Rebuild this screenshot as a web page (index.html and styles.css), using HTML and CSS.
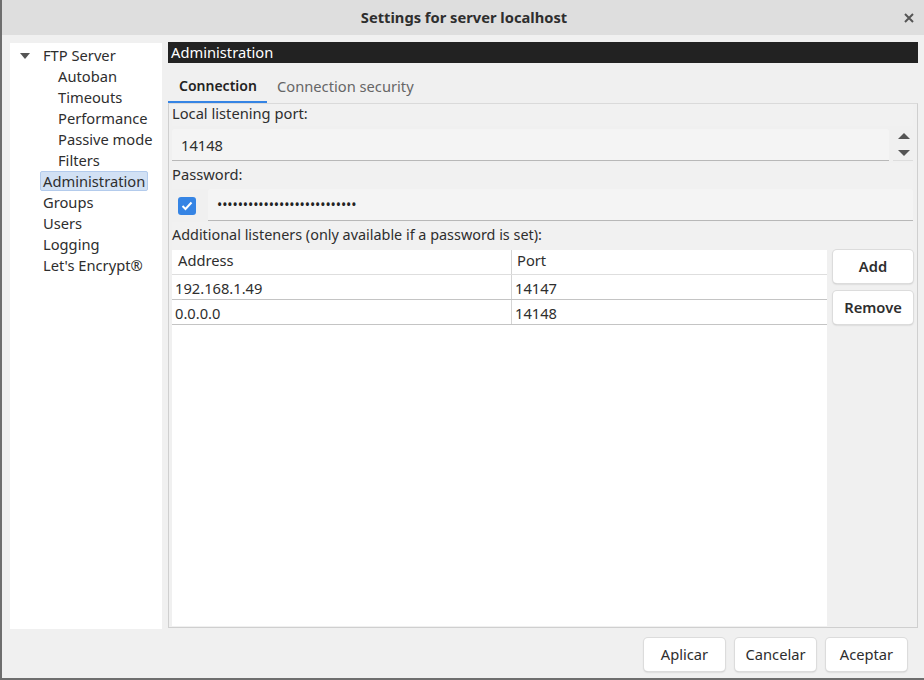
FILE: index.html
```html
<!DOCTYPE html>
<html>
<head>
<meta charset="utf-8">
<link rel="stylesheet" href="styles.css">
</head>
<body>
<div class="window">
  <div class="titlebar">
    <span class="title">Settings for server localhost</span>
    <span class="close">
      <svg width="10" height="10" viewBox="0 0 10 10"><path d="M1 1 L9 9 M9 1 L1 9" stroke="#555" stroke-width="2"/></svg>
    </span>
  </div>
  <div class="main">
    <div class="tree">
      <div class="node top"><span class="twisty"><svg width="10" height="6" viewBox="0 0 10 6"><path d="M0 0 H10 L5 6 Z" fill="#555"/></svg></span>FTP Server</div>
      <div class="node child">Autoban</div>
      <div class="node child">Timeouts</div>
      <div class="node child">Performance</div>
      <div class="node child">Passive mode</div>
      <div class="node child">Filters</div>
      <div class="node top"><span class="sel">Administration</span></div>
      <div class="node top">Groups</div>
      <div class="node top">Users</div>
      <div class="node top">Logging</div>
      <div class="node top">Let's Encrypt®</div>
    </div>
    <div class="panel">
      <div class="heading">Administration</div>
      <div class="tabs">
        <div class="tab active">Connection</div>
        <div class="tab">Connection security</div>
      </div>
      <div class="frame">
        <div class="label l1">Local listening port:</div>
        <div class="spinrow">
          <div class="input spin">14148</div>
          <div class="spinbtns">
            <svg width="12" height="8" viewBox="0 0 12 8"><path d="M0 7 L6 1 L12 7 Z" fill="#555"/></svg>
            <svg width="12" height="8" viewBox="0 0 12 8"><path d="M0 1 L12 1 L6 7 Z" fill="#555"/></svg>
          </div>
        </div>
        <div class="label l2">Password:</div>
        <div class="pwrow">
          <span class="check"><svg width="12" height="10" viewBox="0 0 12 10"><path d="M1.5 5 L4.5 8 L10.5 1.5" stroke="#fff" stroke-width="2" fill="none"/></svg></span>
          <div class="input pw">•••••••••••••••••••••••••••</div>
        </div>
        <div class="label l3">Additional listeners (only available if a password is set):</div>
        <div class="listarea">
          <div class="table">
            <div class="row head"><div class="c1">Address</div><div class="c2">Port</div></div>
            <div class="row"><div class="c1">192.168.1.49</div><div class="c2">14147</div></div>
            <div class="row"><div class="c1">0.0.0.0</div><div class="c2">14148</div></div>
          </div>
          <div class="sidebtns">
            <button class="btn">Add</button>
            <button class="btn">Remove</button>
          </div>
        </div>
      </div>
    </div>
  </div>
  <div class="footer">
    <button class="btn foot">Aplicar</button>
    <button class="btn foot">Cancelar</button>
    <button class="btn foot">Aceptar</button>
  </div>
</div>
</body>
</html>
```

FILE: styles.css
```css
* { box-sizing: border-box; }
html, body { margin: 0; padding: 0; }
body {
  width: 924px;
  height: 680px;
  overflow: hidden;
  font-family: "Noto Sans", "Open Sans", sans-serif;
  font-size: 14.7px;
  color: #2e2e2e;
  background: #6e6e6e;
}
.window {
  margin-left: 2px;
  width: 922px;
  height: 678px;
  background: #f0f0f0;
  display: flex;
  flex-direction: column;
}
.titlebar {
  height: 35px;
  background: #dedede;
  display: flex;
  align-items: center;
  justify-content: center;
  position: relative;
}
.title {
  font-weight: bold;
  font-size: 14.7px;
  color: #2e2e2e;
  margin-left: 2px;
  margin-bottom: 2px;
}
.close {
  position: absolute;
  right: 10px;
  top: 13px;
  width: 10px;
  height: 10px;
  display: flex;
}
.main {
  display: flex;
  padding: 7px 2px 0 8px;
  gap: 6px;
  height: 593px;
}
.tree {
  width: 152px;
  height: 586px;
  margin-top: 1px;
  background: #fff;
  padding-top: 2px;
}
.node {
  height: 21px;
  line-height: 21px;
  white-space: nowrap;
}
.node.top { padding-left: 33px; position: relative; }
.node.child { padding-left: 48px; }
.twisty {
  position: absolute;
  left: 10px;
  top: 8px;
  display: flex;
}
.sel {
  display: inline-block;
  margin-left: -3px;
  padding: 0 2px;
  height: 20px;
  line-height: 19px;
  background: #d2e1f4;
  border: 1px solid #b3cbec;
  border-radius: 2px;
}
.panel {
  flex: 1;
  display: flex;
  flex-direction: column;
}
.heading {
  height: 21px;
  line-height: 20px;
  background: #222;
  color: #fff;
  padding-left: 3px;
  margin-right: 4px;
}
.tabs {
  display: flex;
  height: 40px;
  padding-top: 7px;
  align-items: stretch;
}
.tab {
  padding: 6px 10px 0 10px;
  color: #666;
  height: 33px;
}
.tab.active {
  color: #222;
  font-weight: 600;
  border-bottom: 2px solid #3584e4;
  width: 99px;
  padding-left: 11px;
  font-size: 14px;
  padding-top: 6px;
}
.frame {
  height: 526px;
  border: 1px solid #cfcfcf;
  border-top: 1px solid #dadada;
  margin-right: 4px;
  padding: 0 4px 0 3px;
  display: flex;
  flex-direction: column;
  background: #f0f0f0;
}
.label {
  background: #f1f1f1;
  white-space: nowrap;
}
.l1 { height: 22px; line-height: 18px; }
.l2 { height: 26px; line-height: 22px; margin-top: 2px; }
.l3 { height: 28px; line-height: 26px; font-size: 14.4px; }
.spinrow {
  display: flex;
  height: 35px;
  padding-top: 3px;
  gap: 4px;
}
.input {
  background: #f4f4f4;
  border-bottom: 1px solid #b8b8b8;
  border-radius: 3px 3px 0 0;
  height: 32px;
  line-height: 32px;
}
.spin {
  flex: 1;
  padding-left: 9px;
}
.spinbtns {
  width: 20px;
  border-bottom: 1px solid #ddd;
  display: flex;
  flex-direction: column;
  align-items: center;
  justify-content: space-between;
  padding: 3px 0 3px 2px;
}
.pwrow {
  display: flex;
  align-items: flex-start;
  height: 33px;
}
.check {
  width: 18px;
  height: 18px;
  margin-top: 8px;
  margin-left: 6px;
  margin-right: 12px;
  background: #3584e4;
  border-radius: 3px;
  display: flex;
  align-items: center;
  justify-content: center;
}
.pw {
  flex: 1;
  padding-left: 9px;
  letter-spacing: -0.1px;
  font-size: 14px;
  color: #222;
}
.listarea {
  display: flex;
  flex: 1;
  padding-bottom: 1px;
}
.table {
  width: 655px;
  background: #fff;
}
.row {
  display: flex;
  height: 25px;
  line-height: 26px;
  border-bottom: 1px solid #c4c4c4;
}
.row.head {
  border-bottom: 1px solid #dedede;
  line-height: 21px;
}
.c1 {
  width: 340px;
  padding-left: 3px;
  border-right: 1px solid #d4d4d4;
}
.row.head .c1 { padding-left: 6px; }
.c2 {
  padding-left: 3px;
}
.row.head .c2 { padding-left: 5px; }
.sidebtns {
  display: flex;
  flex-direction: column;
  gap: 8px;
  padding-left: 6px;
  padding-top: 0;
}
.btn {
  font-family: inherit;
  font-size: 14.7px;
  background: #fff;
  border: none;
  border-radius: 4px;
  box-shadow: 0 0 0 1px #dcdcdc, 0 1px 2px rgba(0,0,0,0.25);
  color: #2e2e2e;
  width: 80px;
  height: 33px;
  padding: 0;
}
.sidebtns .btn { font-weight: 600; }
.footer {
  display: flex;
  justify-content: flex-end;
  gap: 10px;
  padding: 10px 17px 0 0;
}
.foot {
  width: 81px;
  padding-bottom: 2px;
}
```
